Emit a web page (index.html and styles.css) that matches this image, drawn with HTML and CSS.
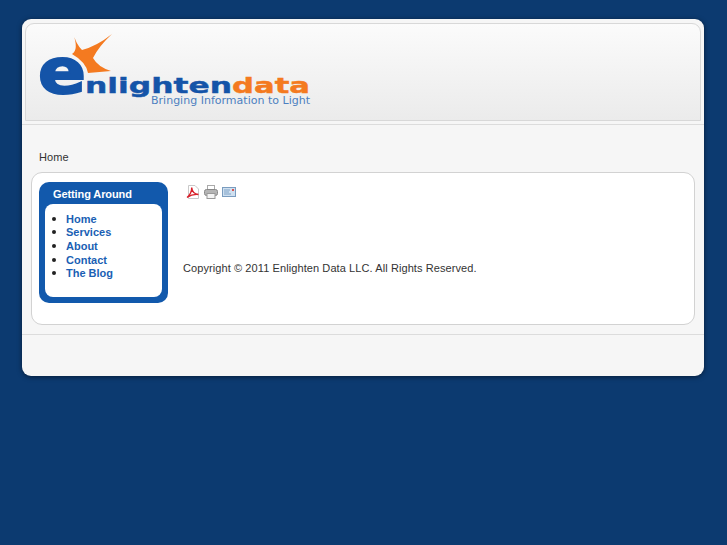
FILE: index.html
```html
<!DOCTYPE html>
<html lang="en">
<head>
    <meta charset="UTF-8">
    <meta name="viewport" content="width=device-width, initial-scale=1.0">
    <title>Enlighten Data</title>
    <link rel="stylesheet" href="styles.css">
</head>
<body>
    <div class="page">
        <div class="header">
            <svg class="logo" width="276" height="78" viewBox="0 0 276 78">
                <path class="logo-star" d="M44 1 Q47 12 53 18 Q68 14 83 2 Q70 14 64 26 Q69 35 82 39 L59 41 Q57 30 43 22 Q50 18 44 1 Z"/>
                <text class="logo-e" x="9" y="61" textLength="48" lengthAdjust="spacingAndGlyphs">e</text>
                <text class="logo-name" x="56" y="61" textLength="147" lengthAdjust="spacingAndGlyphs">nlighten</text>
                <text class="logo-data" x="203" y="61" textLength="78" lengthAdjust="spacingAndGlyphs">data</text>
                <text class="logo-tag" x="122" y="72" textLength="159" lengthAdjust="spacingAndGlyphs">Bringing Information to Light</text>
            </svg>
        </div>

        <div class="crumbs">Home</div>

        <div class="content">
            <div class="sidebar">
                <h3>Getting Around</h3>
                <div class="sidebar-box">
                    <ul>
                        <li><a href="#">Home</a></li>
                        <li><a href="#">Services</a></li>
                        <li><a href="#">About</a></li>
                        <li><a href="#">Contact</a></li>
                        <li><a href="#">The Blog</a></li>
                    </ul>
                </div>
            </div>
            <div class="main">
                <div class="icons">
                    <svg width="14" height="14" viewBox="0 0 14 14">
                        <path d="M2.5 .5H9L12.5 4V13.5H2.5Z" fill="#fff" stroke="#c9c9c9"/>
                        <path d="M1 12.5C4 10.5 6 6 5.7 2.5C6 6 8 9 12.5 9.5C8 9 4.5 10 1 12.5Z" fill="none" stroke="#d8202a" stroke-width="1.4"/>
                    </svg>
                    <svg width="14" height="14" viewBox="0 0 14 14">
                        <rect x="3.5" y=".5" width="7" height="5" fill="#fff" stroke="#aaa"/>
                        <rect x=".5" y="4.5" width="13" height="6" rx="2" fill="#b4b4b4" stroke="#888"/>
                        <rect x="3" y="8.5" width="8" height="5" fill="#f4f4f4" stroke="#999"/>
                    </svg>
                    <svg width="14" height="10" viewBox="0 0 14 10">
                        <rect x=".5" y=".5" width="13" height="9" fill="#cfe0f0" stroke="#7a9cbf"/>
                        <path d="M2 3H8M2 5H7M2 7H9" stroke="#7fa2c6"/>
                        <rect x="10" y="2" width="2" height="2" fill="#d9534f"/>
                    </svg>
                </div>
                <p class="copyright">Copyright &copy; 2011 Enlighten Data LLC. All Rights Reserved.</p>
            </div>
        </div>

        <div class="footer"></div>
    </div>
</body>
</html>
```

FILE: styles.css
```css
* {
    margin: 0;
    padding: 0;
    box-sizing: border-box;
}

body {
    font-family: "Liberation Sans", Arial, sans-serif;
    font-size: 11px;
    background-color: #0c3a70;
    color: #333;
    height: 545px;
    overflow: hidden;
}

/* Main sheet */
.page {
    width: 682px;
    height: 357px;
    margin: 19px 0 0 22px;
    padding-top: 4px;
    background-color: #f6f6f6;
    border-radius: 9px;
    box-shadow: 0 1px 5px rgba(0, 0, 0, 0.5);
}

/* Header */
.header {
    height: 98px;
    margin: 0 3px;
    border: 1px solid #d8d8d8;
    border-radius: 9px 9px 0 0;
    background: linear-gradient(#fbfbfb, #ebebeb);
    overflow: hidden;
}

.logo {
    display: block;
    margin: 8px 0 0 3px;
    overflow: visible;
}

.logo-star {
    fill: #f47a20;
}

.logo-e,
.logo-name,
.logo-data {
    font-family: "DejaVu Sans", sans-serif;
    font-weight: bold;
}

.logo-e {
    font-size: 62px;
    fill: #1454a8;
    stroke: #1454a8;
    stroke-width: 2px;
}

.logo-name {
    font-size: 21px;
    fill: #1454a8;
    stroke: #1454a8;
    stroke-width: 0.4px;
}

.logo-data {
    font-size: 21px;
    fill: #f47a20;
    stroke: #f47a20;
    stroke-width: 0.4px;
}

.logo-tag {
    font-family: "DejaVu Sans", sans-serif;
    font-size: 10px;
    fill: #4c7fc0;
}

/* Breadcrumb */
.crumbs {
    height: 48px;
    margin-top: 3px;
    padding: 26px 0 0 17px;
    border-top: 1px solid #dcdcdc;
    line-height: 13px;
    letter-spacing: 0.1px;
}

/* Content panel */
.content {
    display: flex;
    height: 153px;
    margin: 0 9px;
    padding: 9px 7px;
    background-color: #fff;
    border: 1px solid #d2d2d2;
    border-radius: 11px;
}

.sidebar {
    width: 129px;
    height: 121px;
    padding: 0 6px;
    background-color: #1259ac;
    border-radius: 10px;
}

.sidebar h3 {
    height: 22px;
    padding-left: 8px;
    font-size: 11px;
    line-height: 24px;
    letter-spacing: -0.1px;
    color: #fff;
}

.sidebar-box {
    height: 93px;
    background-color: #fff;
    border-radius: 8px;
    padding-top: 8px;
}

.sidebar-box ul {
    list-style: none;
    padding-left: 7px;
}

.sidebar-box li {
    display: flex;
    align-items: center;
    gap: 10px;
    height: 13.6px;
}

.sidebar-box li::before {
    content: "";
    width: 4px;
    height: 4px;
    border-radius: 50%;
    background-color: #222;
}

.sidebar-box a {
    font-weight: bold;
    color: #1a5fb4;
    text-decoration: none;
}

.main {
    padding-left: 15px;
    flex: 1;
}

.icons {
    display: flex;
    align-items: center;
    gap: 4px;
    height: 20px;
    padding-left: 3px;
}

.copyright {
    margin-top: 60px;
    line-height: 13px;
    letter-spacing: 0.09px;
}

/* Footer strip */
.footer {
    margin-top: 9px;
    border-top: 1px solid #dcdcdc;
}
```
